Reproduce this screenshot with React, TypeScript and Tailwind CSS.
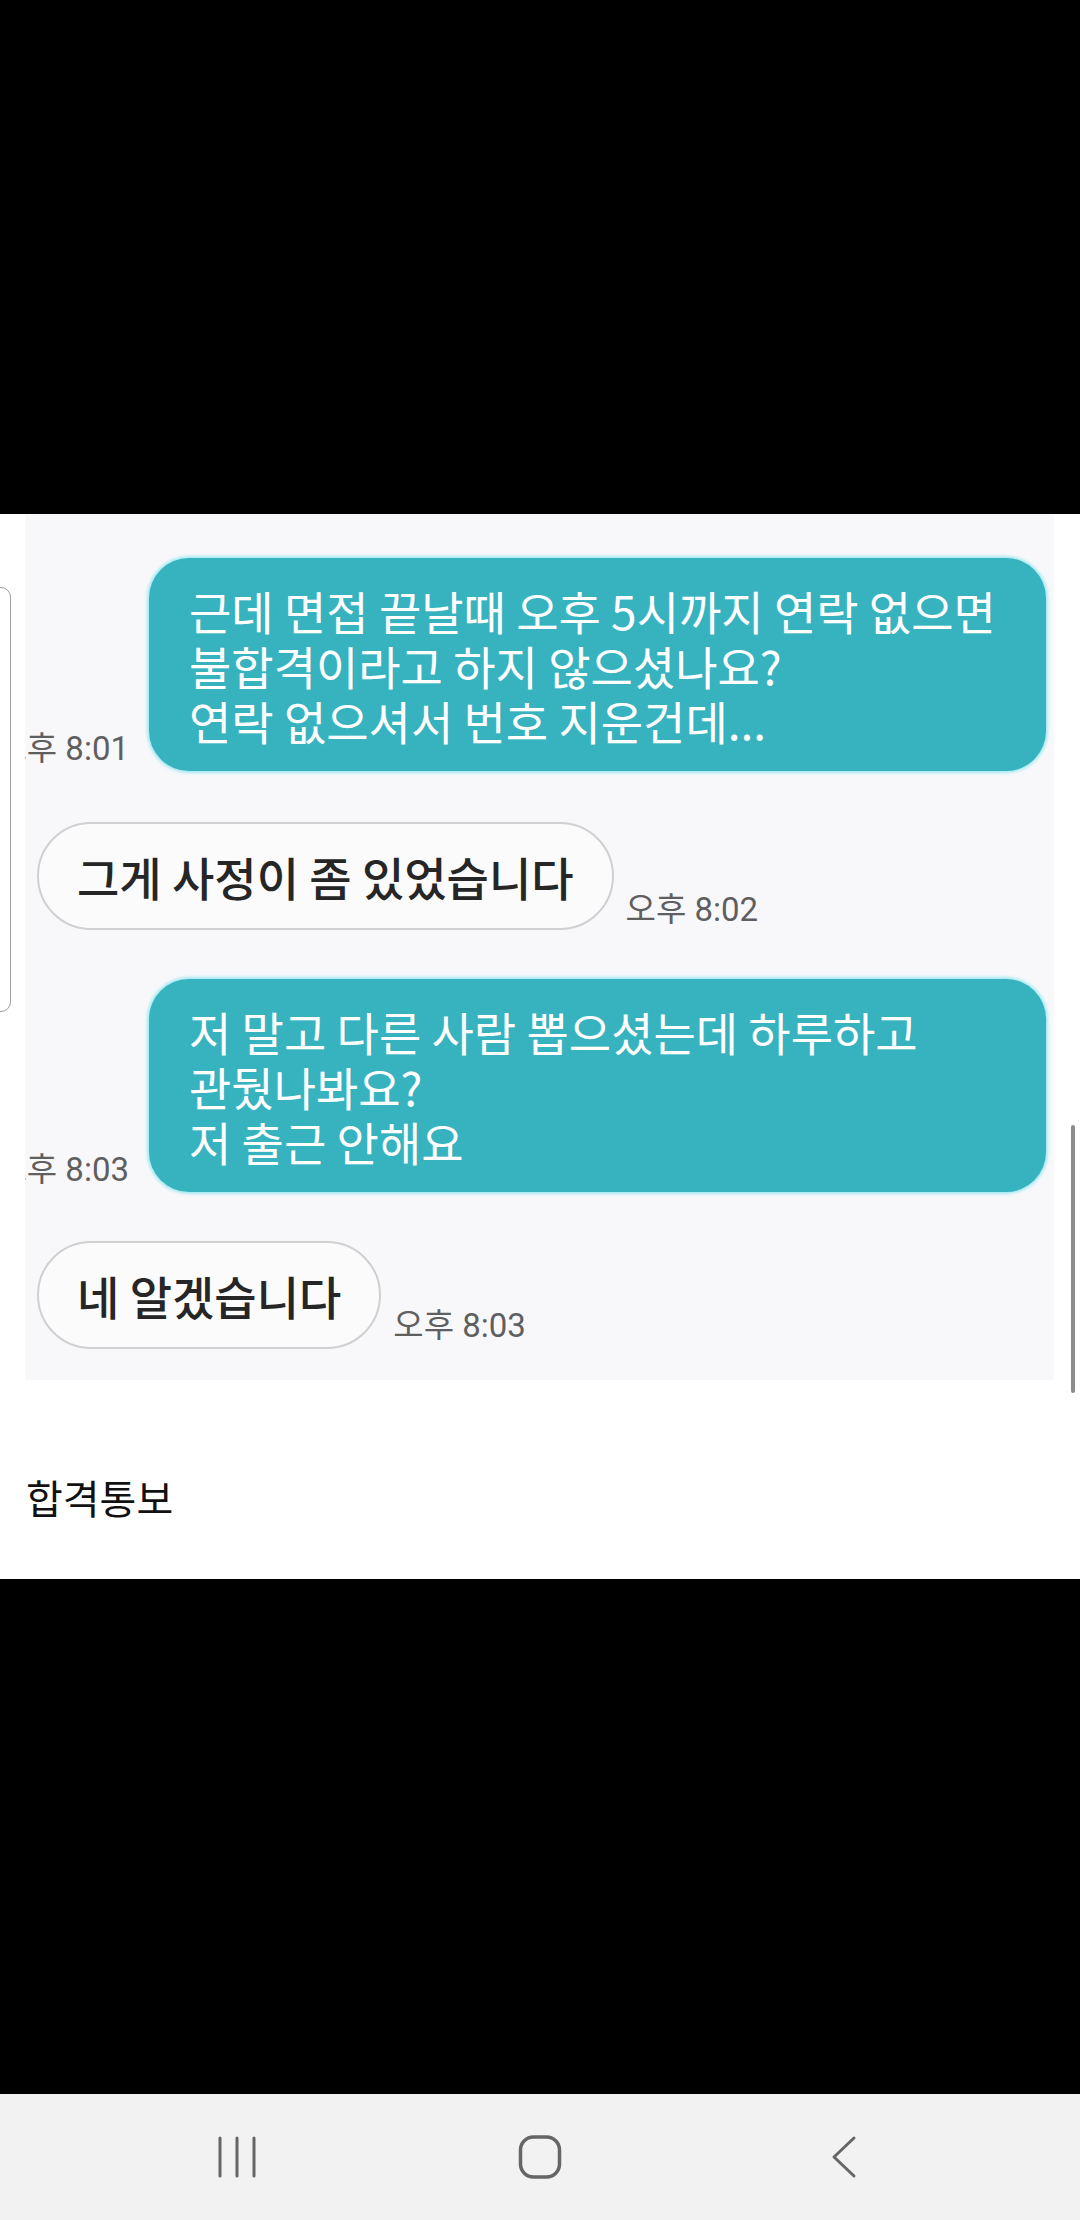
const kr = "font-['Noto_Sans_CJK_KR','Noto_Sans_CJK_SC',sans-serif]";
const time = "font-['Roboto','Noto_Sans_CJK_KR',sans-serif]";

function SentRow({ lines, at }: { lines: string[]; at: string }) {
  return (
    <div className="flex justify-end items-end gap-[20px] pr-[8px]">
      <span className={`${time} shrink-0 whitespace-nowrap text-[33px] leading-[40px] text-[#5f5f5f] mb-[2px]`}>{at}</span>
      <div
        className={`${kr} shrink-0 w-[897px] h-[213px] rounded-[40px] bg-[#37b3bf] shadow-[0_0_3px_2px_rgba(130,228,236,0.7)] pl-[40px] pt-[25px] text-white text-[46px] leading-[55px]`}
      >
        {lines.map((l) => (
          <div key={l} className="whitespace-nowrap">{l}</div>
        ))}
      </div>
    </div>
  );
}

function ReceivedRow({ text, at, mb }: { text: string; at: string; mb: string }) {
  return (
    <div className="flex items-end pl-[12px]">
      <div
        className={`${kr} shrink-0 h-[108px] flex items-center rounded-full border-2 border-[#d0d0d2] bg-[#fbfbfc] px-[38px] text-[#262626] text-[46px] font-medium whitespace-nowrap`}
      >
        {text}
      </div>
      <span className={`${time} ml-[12px] whitespace-nowrap text-[33px] leading-[40px] text-[#5f5f5f] ${mb}`}>{at}</span>
    </div>
  );
}

export default function App() {
  return (
    <div className="w-[1080px] h-[2220px] bg-black flex flex-col overflow-hidden">
      <div className="h-[514px] shrink-0" />

      <div className="relative h-[1065px] shrink-0 bg-white">
        {/* edge of a card peeking in from the left */}
        <div className="absolute left-[-20px] top-[73px] w-[31px] h-[425px] rounded-[10px] border border-[#a0a0a0]" />
        {/* scrollbar */}
        <div className="absolute left-[1071px] top-[611px] w-[4px] h-[268px] rounded-full bg-[#8c8c8c]" />

        <div className="ml-[25px] mr-[26px] h-[866px] bg-[#f8f8fb] overflow-hidden pt-[44px] flex flex-col">
          <SentRow
            at="오후 8:01"
            lines={["근데 면접 끝날때 오후 5시까지 연락 없으면", "불합격이라고 하지 않으셨나요?", "연락 없으셔서 번호 지운건데..."]}
          />
          <div className="mt-[51px]">
            <ReceivedRow text="그게 사정이 좀 있었습니다" at="오후 8:02" mb="mb-0" />
          </div>
          <div className="mt-[49px]">
            <SentRow at="오후 8:03" lines={["저 말고 다른 사람 뽑으셨는데 하루하고", "관뒀나봐요?", "저 출근 안해요"]} />
          </div>
          <div className="mt-[49px]">
            <ReceivedRow text="네 알겠습니다" at="오후 8:03" mb="mb-[3px]" />
          </div>
        </div>

        <p className={`${kr} mt-[89px] pl-[26px] text-[40px] leading-[57px] text-[#111]`}>합격통보</p>
      </div>

      <div className="h-[515px] shrink-0" />

      <nav className="h-[126px] shrink-0 bg-[#f2f2f2] flex items-center justify-center gap-[259px]">
        <svg width="44" height="44" viewBox="0 0 44 44" fill="none" stroke="#666" strokeWidth="3" strokeLinecap="round">
          <line x1="5" y1="3" x2="5" y2="41" />
          <line x1="22" y1="3" x2="22" y2="41" />
          <line x1="39" y1="3" x2="39" y2="41" />
        </svg>
        <svg width="44" height="44" viewBox="0 0 44 44" fill="none" stroke="#666" strokeWidth="3.5">
          <rect x="2.5" y="2" width="39" height="40" rx="13" />
        </svg>
        <svg width="44" height="44" viewBox="0 0 44 44" fill="none" stroke="#666" strokeWidth="3" strokeLinecap="round" strokeLinejoin="round">
          <polyline points="33,3 13,22 33,41" />
        </svg>
      </nav>
    </div>
  );
}
